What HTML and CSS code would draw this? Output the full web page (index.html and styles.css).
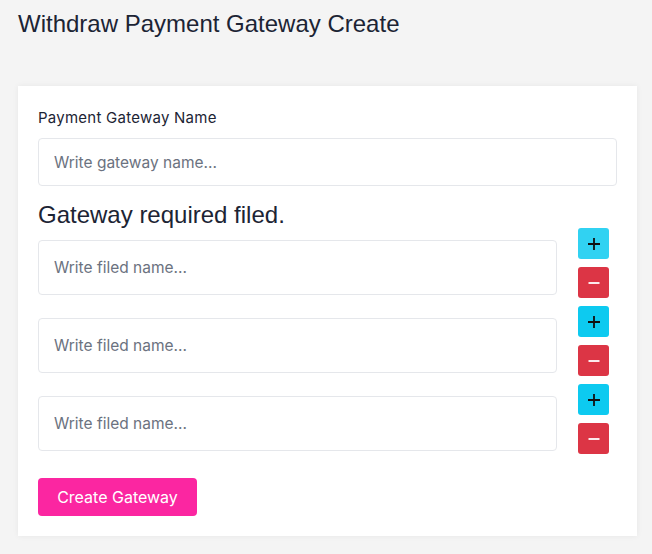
FILE: index.html
```html
<!DOCTYPE html>
<html>
<head>
<meta charset="utf-8">
<link rel="stylesheet" href="styles.css">
</head>
<body>
<div class="page">
  <h1 class="title">Withdraw Payment Gateway Create</h1>
  <div class="card">
    <label class="label">Payment Gateway Name</label>
    <input class="input name-input" type="text" placeholder="Write gateway name...">
    <h2 class="subtitle">Gateway required filed.</h2>
    <div class="rows">
      <div class="row">
        <input class="input field-input" type="text" placeholder="Write filed name...">
        <div class="actions">
          <button class="btn-icon add add-hover">
            <svg width="14" height="14" viewBox="0 0 14 14"><path d="M7 1v12M1 7h12" stroke="#111" stroke-width="1.8" fill="none"/></svg>
          </button>
          <button class="btn-icon remove">
            <svg width="14" height="14" viewBox="0 0 14 14"><path d="M1.5 7h11" stroke="#fff" stroke-width="1.8" fill="none"/></svg>
          </button>
        </div>
      </div>
      <div class="row">
        <input class="input field-input" type="text" placeholder="Write filed name...">
        <div class="actions">
          <button class="btn-icon add">
            <svg width="14" height="14" viewBox="0 0 14 14"><path d="M7 1v12M1 7h12" stroke="#111" stroke-width="1.8" fill="none"/></svg>
          </button>
          <button class="btn-icon remove">
            <svg width="14" height="14" viewBox="0 0 14 14"><path d="M1.5 7h11" stroke="#fff" stroke-width="1.8" fill="none"/></svg>
          </button>
        </div>
      </div>
      <div class="row">
        <input class="input field-input" type="text" placeholder="Write filed name...">
        <div class="actions">
          <button class="btn-icon add">
            <svg width="14" height="14" viewBox="0 0 14 14"><path d="M7 1v12M1 7h12" stroke="#111" stroke-width="1.8" fill="none"/></svg>
          </button>
          <button class="btn-icon remove">
            <svg width="14" height="14" viewBox="0 0 14 14"><path d="M1.5 7h11" stroke="#fff" stroke-width="1.8" fill="none"/></svg>
          </button>
        </div>
      </div>
    </div>
    <button class="submit">Create Gateway</button>
  </div>
</div>
</body>
</html>
```
FILE: styles.css
```css
* { box-sizing: border-box; }
html, body { margin: 0; padding: 0; }
body {
  background: #f4f4f4;
  font-family: Inter, "Noto Sans", sans-serif;
  color: #1c2434;
}
.page {
  padding: 9px 15px 18px 18px;
}
.title {
  margin: 0;
  font-family: "Liberation Sans", Arial, sans-serif;
  font-weight: 400;
  font-size: 24px;
  line-height: 30px;
  color: #1c2434;
}
.card {
  margin-top: 47px;
  background: #fff;
  padding: 22px 20px 20px 20px;
  box-shadow: 0 0 6px rgba(0,0,0,0.06);
  display: flex;
  flex-direction: column;
}
.label {
  font-size: 15px;
  line-height: 20px;
  font-weight: 400;
  letter-spacing: 0.25px;
  color: #1c2434;
}
.input {
  display: block;
  border: 1px solid #e5e7eb;
  border-radius: 4px;
  padding: 0 15px;
  font-family: Inter, "Noto Sans", sans-serif;
  font-size: 15.5px;
  color: #1c2434;
  background: #fff;
  outline: none;
}
.input::placeholder { color: #6b7280; opacity: 1; }
.name-input {
  margin-top: 10px;
  width: 100%;
  height: 48px;
}
.subtitle {
  margin: 16px 0 0 0;
  font-family: "Liberation Sans", Arial, sans-serif;
  font-weight: 400;
  font-size: 24px;
  line-height: 26px;
  color: #1c2434;
}
.rows {
  display: flex;
  flex-direction: column;
  gap: 8px;
}
.row {
  display: flex;
  align-items: flex-start;
}
.field-input {
  flex: 1;
  min-width: 0;
  height: 55px;
  margin-top: 12px;
}
.actions {
  width: 60px;
  padding-left: 21px;
  display: flex;
  flex-direction: column;
  gap: 8px;
}
.btn-icon {
  width: 31px;
  height: 31px;
  border: none;
  border-radius: 3px;
  padding: 0;
  display: flex;
  align-items: center;
  justify-content: center;
  cursor: pointer;
}
.add { background: #0dcaf0; }
.add-hover { background: #31d2f2; }
.remove { background: #dc3545; }
.submit {
  align-self: flex-start;
  margin-top: 24px;
  width: 159px;
  height: 38px;
  border: none;
  border-radius: 4px;
  background: #fb26a1;
  color: #fff;
  font-family: Inter, "Noto Sans", sans-serif;
  font-size: 16px;
  padding: 0;
}
```
